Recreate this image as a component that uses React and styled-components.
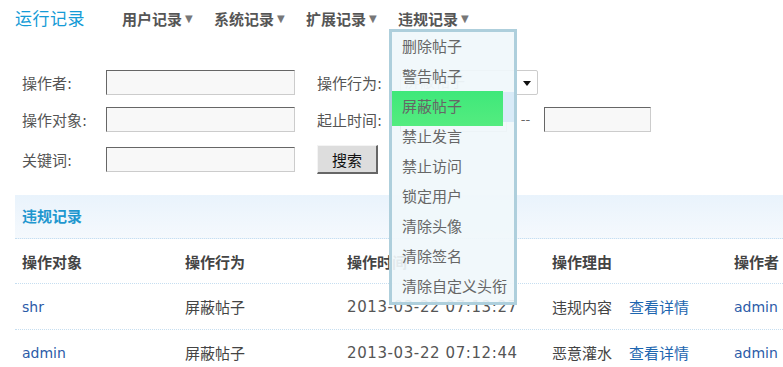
import React from "react";
import styled, { createGlobalStyle } from "styled-components";

const GlobalStyle = createGlobalStyle`
  html, body {
    margin: 0;
    padding: 0;
    background: #fff;
    overflow: hidden;
  }
  body {
    font-family: "DejaVu Sans", "Noto Sans CJK SC", sans-serif;
    color: #444;
  }
`;

const menuItems = [
  "删除帖子",
  "警告帖子",
  "屏蔽帖子",
  "禁止发言",
  "禁止访问",
  "锁定用户",
  "清除头像",
  "清除签名",
  "清除自定义头衔",
];

const rows = [
  { target: "shr", action: "屏蔽帖子", time: "2013-03-22 07:13:27", reason: "违规内容", by: "admin" },
  { target: "admin", action: "屏蔽帖子", time: "2013-03-22 07:12:44", reason: "恶意灌水", by: "admin" },
];

function App() {
  return (
    <Page>
      <GlobalStyle />
      <Nav>
        <Brand>运行记录</Brand>
        <NavItem>用户记录<Caret>▼</Caret></NavItem>
        <NavItem>系统记录<Caret>▼</Caret></NavItem>
        <NavItem>扩展记录<Caret>▼</Caret></NavItem>
        <NavItem>
          违规记录<Caret>▼</Caret>
          <Menu>
            {menuItems.map((m) => (
              <MenuItem key={m} $active={m === "屏蔽帖子"}>
                <span>{m}</span>
              </MenuItem>
            ))}
          </Menu>
        </NavItem>
      </Nav>

      <Form>
        <FormRow>
          <Label>操作者:</Label>
          <TextInput />
          <Label $second>操作行为:</Label>
          <Select>
            <span>屏蔽帖子</span>
            <SelectArrow />
          </Select>
        </FormRow>
        <FormRow $mt={12}>
          <Label>操作对象:</Label>
          <TextInput />
          <Label $second>起止时间:</Label>
          <DateInput />
          <Dash>--</Dash>
          <DateInput />
        </FormRow>
        <FormRow $mt={13} $h={29}>
          <Label>关键词:</Label>
          <TextInput />
          <SearchButton $second>搜索</SearchButton>
        </FormRow>
      </Form>

      <Section>
        <SectionTitle>违规记录</SectionTitle>
        <Table>
          <HeadRow>
            <span>操作对象</span>
            <span>操作行为</span>
            <span>操作时间</span>
            <span>操作理由</span>
            <span>操作者</span>
          </HeadRow>
          {rows.map((r) => (
            <Row key={r.time}>
              <Link>{r.target}</Link>
              <span>{r.action}</span>
              <Time>{r.time}</Time>
              <span>
                {r.reason}
                <Detail>查看详情</Detail>
              </span>
              <Link>{r.by}</Link>
            </Row>
          ))}
        </Table>
      </Section>
    </Page>
  );
}

export default App;

const Page = styled.div`
  width: 783px;
  height: 367px;
  position: relative;
`;

const Nav = styled.div`
  display: flex;
  align-items: center;
  height: 35px;
  padding-left: 15px;
`;

const Brand = styled.div`
  font-size: 17px;
  color: #159bd6;
  width: 107px;
  letter-spacing: 0.5px;
`;

const NavItem = styled.div`
  position: relative;
  display: flex;
  align-items: center;
  width: 92px;
  height: 100%;
  font-size: 15px;
  font-weight: bold;
  color: #555;
  padding-top: 1px;
  box-sizing: border-box;
`;

const Caret = styled.span`
  font-size: 10px;
  color: #777;
  margin-left: 3px;
  font-weight: normal;
`;

const Menu = styled.div`
  position: absolute;
  top: 29px;
  left: -9px;
  width: 128px;
  box-sizing: border-box;
  border: 3px solid #aecfdc;
  background: rgba(240, 247, 251, 0.92);
  z-index: 10;
`;

const MenuItem = styled.div`
  position: relative;
  height: 30px;
  line-height: 30px;
  padding-left: 10px;
  font-size: 15px;
  font-weight: normal;
  color: #666;
  white-space: nowrap;
  background: ${(p) => (p.$active ? "#d9ebf8" : "transparent")};

  span {
    position: relative;
  }

  &::before {
    content: "";
    display: ${(p) => (p.$active ? "block" : "none")};
    position: absolute;
    left: 0;
    top: -1px;
    width: 111px;
    height: 35px;
    background: linear-gradient(#3fe87a, #54ec7f);
  }
`;

const Form = styled.div`
  padding-left: 22px;
  padding-top: 35px;
`;

const FormRow = styled.div`
  display: flex;
  align-items: center;
  height: ${(p) => p.$h || 25}px;
  margin-top: ${(p) => p.$mt || 0}px;
`;

const Label = styled.div`
  width: ${(p) => (p.$second ? 83 : 84)}px;
  margin-left: ${(p) => (p.$second ? 22 : 0)}px;
  font-size: 15px;
  color: #555;
`;

const TextInput = styled.div`
  width: 189px;
  height: 25px;
  box-sizing: border-box;
  background: #f8f8f8;
  border-top: 1px solid #666;
  border-left: 1px solid #666;
  border-bottom: 1px solid #ccc;
  border-right: 1px solid #ccc;
`;

const DateInput = styled(TextInput)`
  width: 107px;
`;

const Dash = styled.div`
  width: 37px;
  text-align: center;
  font-size: 13px;
  color: #666;
`;

const Select = styled.div`
  position: relative;
  width: 138px;
  height: 25px;
  box-sizing: border-box;
  border: 1px solid #ccc;
  border-radius: 2px;
  background: #fff;
  font-size: 15px;
  color: #999;
  padding-left: 4px;
  line-height: 23px;
`;

const SelectArrow = styled.span`
  position: absolute;
  right: 6px;
  top: 10px;
  border-left: 4px solid transparent;
  border-right: 4px solid transparent;
  border-top: 5px solid #111;
`;

const SearchButton = styled.div`
  margin-left: 22px;
  width: 61px;
  height: 29px;
  box-sizing: border-box;
  background: #ddd;
  border-top: 1px solid #f4f4f4;
  border-left: 1px solid #f4f4f4;
  border-bottom: 2px solid #666;
  border-right: 2px solid #666;
  font-size: 15px;
  color: #111;
  display: flex;
  align-items: center;
  justify-content: center;
`;

const Section = styled.div`
  margin-top: 21px;
  margin-left: 15px;
`;

const SectionTitle = styled.div`
  height: 44px;
  line-height: 44px;
  padding-left: 7px;
  background: linear-gradient(#e9f3fc, #f5f9fd);
  border-bottom: 1px dotted #c6def0;
  font-size: 15px;
  font-weight: bold;
  color: #1f97cf;
  box-sizing: border-box;
`;

const Table = styled.div`
  padding-left: 7px;
`;

const HeadRow = styled.div`
  display: grid;
  grid-template-columns: 163px 162px 205px 182px 1fr;
  align-items: center;
  height: 44px;
  border-bottom: 1px dotted #c6def0;
  margin-left: -7px;
  padding-left: 7px;
  font-size: 15px;
  font-weight: bold;
  color: #444;
  white-space: nowrap;
`;

const Row = styled(HeadRow)`
  height: 45px;
  font-weight: normal;
  color: #444;
`;

const Link = styled.span`
  font-size: 14px;
  color: #2c5ba8;
`;

const Time = styled.span`
  font-size: 15px;
  letter-spacing: 0.6px;
  color: #555;
`;

const Detail = styled.span`
  margin-left: 17px;
  color: #1d66b0;
`;
